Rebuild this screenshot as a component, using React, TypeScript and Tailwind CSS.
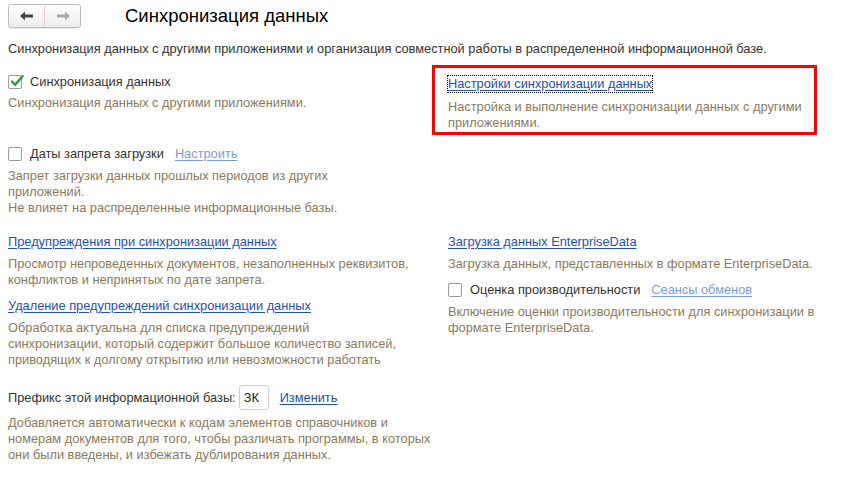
import React from 'react';

const desc = 'text-[#8b7a5c] leading-4';
const link = 'text-[#1f4fb4] underline underline-offset-2 leading-4';
const linkLight = 'text-[#7b9be0] underline underline-offset-2 leading-4';

function CheckBox({ checked }: { checked?: boolean }) {
    return (
        <span className="relative w-[14px] h-[14px] shrink-0 border border-[#9a9a9a] rounded-[2px] bg-white">
            {checked && (
                <svg viewBox="0 0 14 14" className="absolute left-[1px] -top-[2px] w-[14px] h-[14px]">
                    <path d="M2 7.5 L5.2 10.8 L12.5 2.2" fill="none" stroke="#1f9a3a" strokeWidth="2.4" strokeLinecap="round" strokeLinejoin="round" />
                </svg>
            )}
        </span>
    );
}

function NavButtons() {
    return (
        <div className="flex w-[73px] h-[24px] border border-[#bdbdbd] rounded-[3px] bg-gradient-to-b from-white to-[#ececec] shadow-[0_1px_1px_rgba(0,0,0,0.08)]">
            <button className="flex-1 flex items-center justify-center border-r border-[#e8c8cc]">
                <svg viewBox="0 0 14 10" className="w-[14px] h-[10px]">
                    <path d="M0 5 L5 0.5 L5 3.5 L13 3.5 L13 6.5 L5 6.5 L5 9.5 Z" fill="#444" />
                </svg>
            </button>
            <button className="flex-1 flex items-center justify-center">
                <svg viewBox="0 0 14 10" className="w-[14px] h-[10px]">
                    <path d="M14 5 L9 0.5 L9 3.5 L1 3.5 L1 6.5 L9 6.5 L9 9.5 Z" fill="#a9a9a9" />
                </svg>
            </button>
        </div>
    );
}

export default function App() {
    return (
        <div className="w-[850px] h-[478px] bg-white overflow-hidden text-[12.8px] text-[#333] font-['Liberation_Sans',Arial,sans-serif]">
            <div className="flex items-center pt-[4px] pl-[8px]">
                <NavButtons />
                <h1 className="ml-[44px] text-[18.5px] text-black leading-6">Синхронизация данных</h1>
            </div>

            <p className="mt-[13px] px-[8px] leading-4 whitespace-nowrap">
                Синхронизация данных с другими приложениями и организация совместной работы в распределенной информационной базе.
            </p>

            <div className="flex mt-[8px]">
                <div className="w-[432px] pl-[8px] pt-[9px] flex flex-col whitespace-nowrap">
                    <label className="flex items-center gap-[8px] h-4">
                        <CheckBox checked />
                        <span className="leading-4">Синхронизация данных</span>
                    </label>
                    <p className={`${desc} mt-[5px]`}>Синхронизация данных с другими приложениями.</p>

                    <div className="flex items-center h-4 mt-[35px]">
                        <label className="flex items-center gap-[8px]">
                            <CheckBox />
                            <span className="leading-4">Даты запрета загрузки</span>
                        </label>
                        <a className={`${linkLight} ml-[11px]`}>Настроить</a>
                    </div>
                    <p className={`${desc} mt-[6px]`}>
                        Запрет загрузки данных прошлых периодов из других
                        <br />
                        приложений.
                        <br />
                        Не влияет на распределенные информационные базы.
                    </p>

                    <a className={`${link} mt-[18px] self-start`}>Предупреждения при синхронизации данных</a>
                    <p className={`${desc} mt-[6px]`}>
                        Просмотр непроведенных документов, незаполненных реквизитов,
                        <br />
                        конфликтов и непринятых по дате запрета.
                    </p>

                    <a className={`${link} mt-[10px] self-start`}>Удаление предупреждений синхронизации данных</a>
                    <p className={`${desc} mt-[6px]`}>
                        Обработка актуальна для списка предупреждений
                        <br />
                        синхронизации, который содержит большое количество записей,
                        <br />
                        приводящих к долгому открытию или невозможности работать
                    </p>

                    <div className="flex items-center mt-[17px]">
                        <span className="leading-4">Префикс этой информационной базы:</span>
                        <span className="ml-[3px] w-[30px] h-[25px] border border-[#dcc9cd] rounded-[3px] flex items-center pl-[4px] text-[#222]">ЗК</span>
                        <a className={`${link} ml-[11px]`}>Изменить</a>
                    </div>
                    <p className={`${desc} mt-[5px]`}>
                        Добавляется автоматически к кодам элементов справочников и
                        <br />
                        номерам документов для того, чтобы различать программы, в которых
                        <br />
                        они были введены, и избежать дублирования данных.
                    </p>
                </div>

                <div className="w-[418px] flex flex-col whitespace-nowrap">
                    <div className="w-[385px] border-[3px] border-[#ff0000] pl-[13px] pt-[6px] pb-[4px] h-[70px]">
                        <a className={`${link} inline-block outline outline-1 outline-dotted outline-black`}>
                            Настройки синхронизации данных
                        </a>
                        <p className={`${desc} mt-[6px]`}>
                            Настройка и выполнение синхронизации данных с другими
                            <br />
                            приложениями.
                        </p>
                    </div>

                    <div className="pl-[16px] flex flex-col">
                        <a className={`${link} mt-[99px] self-start`}>Загрузка данных EnterpriseData</a>
                        <p className={`${desc} mt-[6px]`}>Загрузка данных, представленных в формате EnterpriseData.</p>

                        <div className="flex items-center h-4 mt-[10px]">
                            <label className="flex items-center gap-[8px]">
                                <CheckBox />
                                <span className="leading-4">Оценка производительности</span>
                            </label>
                            <a className={`${linkLight} ml-[11px]`}>Сеансы обменов</a>
                        </div>
                        <p className={`${desc} mt-[6px]`}>
                            Включение оценки производительности для синхронизации в
                            <br />
                            формате EnterpriseData.
                        </p>
                    </div>
                </div>
            </div>
        </div>
    );
}
